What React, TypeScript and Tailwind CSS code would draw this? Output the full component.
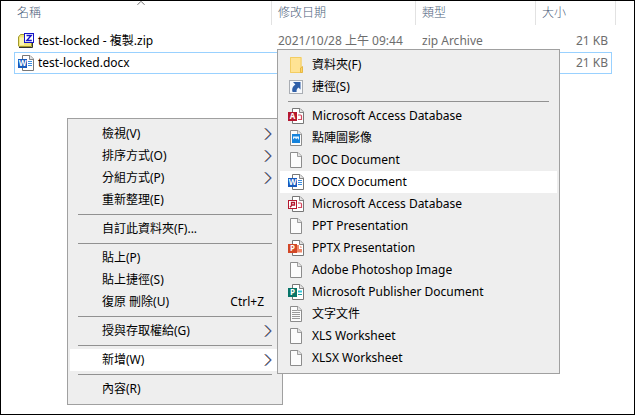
import React from 'react';

type IconName =
  | 'zip'
  | 'folder'
  | 'shortcut'
  | 'access'
  | 'accessLocked'
  | 'bitmap'
  | 'page'
  | 'word'
  | 'powerpoint'
  | 'publisher'
  | 'text';

interface MenuEntry {
  label: string;
  icon?: IconName;
  shortcut?: string;
  submenu?: boolean;
  active?: boolean;
}

const contextMenu: MenuEntry[][] = [
  [
    { label: '檢視(V)', submenu: true },
    { label: '排序方式(O)', submenu: true },
    { label: '分組方式(P)', submenu: true },
    { label: '重新整理(E)' },
  ],
  [{ label: '自訂此資料夾(F)...' }],
  [
    { label: '貼上(P)' },
    { label: '貼上捷徑(S)' },
    { label: '復原 刪除(U)', shortcut: 'Ctrl+Z' },
  ],
  [{ label: '授與存取權給(G)', submenu: true }],
  [{ label: '新增(W)', submenu: true, active: true }],
  [{ label: '內容(R)' }],
];

const newMenu: MenuEntry[][] = [
  [
    { label: '資料夾(F)', icon: 'folder' },
    { label: '捷徑(S)', icon: 'shortcut' },
  ],
  [
    { label: 'Microsoft Access Database', icon: 'access' },
    { label: '點陣圖影像', icon: 'bitmap' },
    { label: 'DOC Document', icon: 'page' },
    { label: 'DOCX Document', icon: 'word', active: true },
    { label: 'Microsoft Access Database', icon: 'accessLocked' },
    { label: 'PPT Presentation', icon: 'page' },
    { label: 'PPTX Presentation', icon: 'powerpoint' },
    { label: 'Adobe Photoshop Image', icon: 'page' },
    { label: 'Microsoft Publisher Document', icon: 'publisher' },
    { label: '文字文件', icon: 'text' },
    { label: 'XLS Worksheet', icon: 'page' },
    { label: 'XLSX Worksheet', icon: 'page' },
  ],
];

const Page = () => (
  <>
    <path d="M2.5 .5H10L13.5 4V15.5H2.5Z" fill="#fcfcfc" stroke="#8c8c8c" />
    <path d="M9.5 .5V4.5H13.5" fill="#e4e4e4" stroke="#8c8c8c" strokeWidth=".8" />
  </>
);

const OfficePage: React.FC<{ color: string; letter: string; children: React.ReactNode }> = ({
  color,
  letter,
  children,
}) => (
  <>
    <path d="M4.5 .5H12L15.5 4V15.5H4.5Z" fill="#fff" stroke="#777" />
    <path d="M11.5 .5V4.5H15.5" fill="#e4e4e4" stroke="#777" strokeWidth=".9" />
    {children}
    <rect y="4" width="9" height="9" fill={color} />
    <text x="4.5" y="11.3" textAnchor="middle" fontSize="8" fontWeight="700" fill="#fff">
      {letter}
    </text>
  </>
);

const drawings: Record<IconName, React.ReactNode> = {
  zip: (
    <>
      <path d="M.5 13V4L2.5 1.5H6.5L8 3.5H13.5V13.5H1Z" fill="#f3e77c" stroke="#a39a2c" />
      <path d="M1 14.5H14.5V10" fill="none" stroke="#333" />
      <path d="M2 4.5H6V12H2Z" fill="#fbf6b4" />
      <rect x="6.5" y=".5" width="9" height="9" fill="#fff" stroke="#1414c8" />
      <path d="M8.5 2.5H13.2L8.8 7.5H13.8" fill="none" stroke="#1414c8" strokeWidth="1.4" />
    </>
  ),
  folder: (
    <>
      <path d="M2 0H13.5V10H14.5V16H2Z" fill="#fcdc7c" />
      <path d="M2.5 .5H13V15.5H2.5Z" fill="#ffe394" stroke="#f3cd62" />
      <path d="M12.5 15.5V11L14.5 9.5V15.5Z" fill="#ffd55e" stroke="#dfae38" strokeWidth=".8" />
    </>
  ),
  shortcut: (
    <>
      <rect x="1.5" y="1.5" width="13" height="13" fill="#f7f9fc" stroke="#a9adb3" />
      <path d="M5 3H12.5V10.5L10.4 8.4C8.9 9.6 8.4 10.8 8.6 13H4.6C3.5 9.8 4.8 7 7.4 5.4Z" fill="#2f5fa8" />
    </>
  ),
  access: (
    <OfficePage color="#b5182f" letter="A">
      <path d="M10 7H12.5Q13.5 7 13.5 8V11.5H10" fill="none" stroke="#d4495e" strokeWidth="1.2" />
    </OfficePage>
  ),
  accessLocked: (
    <>
      <OfficePage color="#b5182f" letter="">
        <path d="M10 7H12.5Q13.5 7 13.5 8V11.5H10" fill="none" stroke="#d4495e" strokeWidth="1.2" />
      </OfficePage>
      <rect x="1" y="5" width="7" height="7" fill="#fff" />
      <path d="M3.5 6.5H6.5V9H3.5ZM4 9L2 11.2" fill="none" stroke="#b5182f" strokeWidth="1.3" />
    </>
  ),
  bitmap: (
    <>
      <Page />
      <rect x="4" y="4" width="8" height="9" fill="#1583dc" />
      <path d="M5 6.5H11V10L9.3 8L8.2 9.2L6.8 7.8L5 9.5Z" fill="#e3f3ff" />
    </>
  ),
  page: <Page />,
  word: (
    <OfficePage color="#185abd" letter="W">
      <path d="M10 6.5H14M10 8.5H14M10 10.5H14" stroke="#3c8de0" />
    </OfficePage>
  ),
  powerpoint: (
    <OfficePage color="#d24726" letter="P">
      <path d="M9 5H11V9H14V12.5H9Z" fill="#f08a6c" />
      <path d="M12 5.5V8H14Q14 6 12 5.5Z" fill="#f7b7a3" />
    </OfficePage>
  ),
  publisher: (
    <OfficePage color="#077568" letter="P">
      <path d="M10 7.5H14" stroke="#31c5d8" strokeWidth="2" />
      <path d="M10 10.5H14" stroke="#1b9aa0" />
    </OfficePage>
  ),
  text: (
    <>
      <Page />
      <path d="M4 4.5H9M4 6.5H12M4 8.5H12M4 10.5H12M4 12.5H12" stroke="#9b9b9b" />
    </>
  ),
};

const FileIcon: React.FC<{ name: IconName }> = ({ name }) => (
  <svg className="h-4 w-4 flex-none" viewBox="0 0 16 16" aria-hidden="true">
    {drawings[name]}
  </svg>
);

const Chevron = () => (
  <svg className="h-3 w-2 flex-none" viewBox="0 0 8 12" fill="none" aria-hidden="true">
    <path d="M.4 .3L6.1 6L.4 11.7" stroke="#f0a050" />
    <path d="M1.9 .3L7.4 6L1.9 11.7" stroke="#2f86e6" />
    <path d="M1.2 .3L6.8 6L1.2 11.7" stroke="#2a2f6a" strokeWidth=".8" />
  </svg>
);

const Menu: React.FC<{ label: string; groups: MenuEntry[][]; className: string }> = ({
  label,
  groups,
  className,
}) => (
  <div
    role="menu"
    aria-label={label}
    className={`absolute border border-[#a0a0a0] bg-[#eeeeee] px-0.5 py-1 ${className}`}
  >
    {groups.map((group, index) => (
      <React.Fragment key={index}>
        {index > 0 && <hr className="mx-2 my-[3px] border-[#919191]" />}
        {group.map((entry, row) => (
          <button
            key={row}
            type="button"
            role="menuitem"
            aria-haspopup={entry.submenu ? 'menu' : undefined}
            className={`flex h-[22px] w-full items-center gap-2 px-2 text-left whitespace-nowrap ${
              entry.active ? 'bg-white' : 'hover:bg-white'
            }`}
          >
            <span className="flex w-4 flex-none">{entry.icon && <FileIcon name={entry.icon} />}</span>
            <span className="flex-1">{entry.label}</span>
            {entry.shortcut && <span className="pr-2">{entry.shortcut}</span>}
            {entry.submenu && <Chevron />}
          </button>
        ))}
      </React.Fragment>
    ))}
  </div>
);

const files: { name: string; icon: IconName; date: string; type: string; size: string; selected: boolean }[] = [
  {
    name: 'test-locked - 複製.zip',
    icon: 'zip',
    date: '2021/10/28 上午 09:44',
    type: 'zip Archive',
    size: '21 KB',
    selected: false,
  },
  { name: 'test-locked.docx', icon: 'word', date: '', type: '', size: '21 KB', selected: true },
];

const FileList = () => (
  <table className="w-full table-fixed border-separate border-spacing-0 text-left">
    <colgroup>
      <col />
      <col className="w-36" />
      <col className="w-30" />
      <col className="w-19" />
      <col className="w-1" />
    </colgroup>
    <thead>
      <tr className="h-6 text-[#4c607a]">
        <th className="border-r border-[#e2e2e2] p-0 pl-[3px] font-light">名稱</th>
        <th className="border-r border-[#e2e2e2] p-0 pl-1.5 font-light">修改日期</th>
        <th className="border-r border-[#e2e2e2] p-0 pl-1.5 font-light">類型</th>
        <th className="p-0 pl-1.5 font-light">大小</th>
        <td className="border-r border-[#e2e2e2] p-0" />
      </tr>
    </thead>
    <tbody>
      <tr className="h-[5px]" />
      {files.map((file) => {
        const edge = file.selected ? 'border-[#99d1ff]' : 'border-transparent';
        return (
          <tr key={file.name} className="h-[22px] text-[#6d6d6d]">
            <td className={`border-y border-l p-0 pl-[3px] ${edge}`}>
              <span className="flex items-center gap-1 text-black">
                <FileIcon name={file.icon} />
                {file.name}
              </span>
            </td>
            <td className={`border-y p-0 pl-1.5 ${edge}`}>{file.date}</td>
            <td className={`border-y p-0 pl-1.5 ${edge}`}>{file.type}</td>
            <td className={`border-y border-r p-0 pr-[3px] text-right ${edge}`}>{file.size}</td>
            <td className="p-0" />
          </tr>
        );
      })}
    </tbody>
  </table>
);

export default function App() {
  return (
    <main className="relative min-h-screen border border-black bg-white pr-[18px] pl-[13px] font-['Noto_Sans','Noto_Sans_CJK_TC',sans-serif] text-[12px] leading-4 text-black">
      <svg className="absolute top-0 left-[136px] h-1 w-2" viewBox="0 0 8 4" fill="none" aria-hidden="true">
        <path d="M.5 3.8L4 .3L7.5 3.8" stroke="#6d6d6d" />
      </svg>
      <FileList />
      <Menu label="資料夾" groups={contextMenu} className="top-[117px] left-[66px] w-[216px]" />
      <Menu label="新增" groups={newMenu} className="top-12 left-[276px] w-[283px]" />
    </main>
  );
}
